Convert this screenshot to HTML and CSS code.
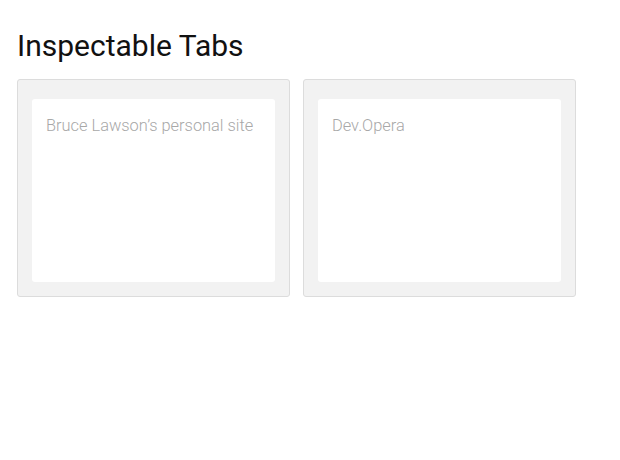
FILE: index.html
```html
<!DOCTYPE html>
<html>
<head>
<meta charset="utf-8">
<link rel="stylesheet" href="styles.css">
</head>
<body>
<h1 class="title">Inspectable Tabs</h1>
<div class="tabs">
  <div class="card"><div class="thumb"><p class="name">Bruce Lawson’s personal site</p></div></div>
  <div class="card"><div class="thumb"><p class="name">Dev.Opera</p></div></div>
</div>
</body>
</html>
```
FILE: styles.css
```css
html, body { margin: 0; background: #fff; }
body { padding: 0 17px; font-family: Roboto, "Noto Sans", sans-serif; }
.title {
  margin: 0;
  padding-top: 28px;
  height: 79px;
  box-sizing: border-box;
  font-size: 30px;
  font-weight: 400;
  line-height: 36px;
  color: #111;
}
.tabs { display: flex; gap: 13px; }
.card {
  width: 271px;
  height: 216px;
  background: #f2f2f2;
  border: 1px solid #dcdcdc;
  border-radius: 3px;
}
.thumb {
  box-sizing: border-box;
  margin: 19px 14px 0;
  height: 183px;
  background: #fff;
  border-radius: 3px;
  padding: 15px 14px 0;
}
.name {
  margin: 0;
  font-size: 16.4px;
  font-weight: 300;
  line-height: 24px;
  color: #a8a8a8;
}
```
